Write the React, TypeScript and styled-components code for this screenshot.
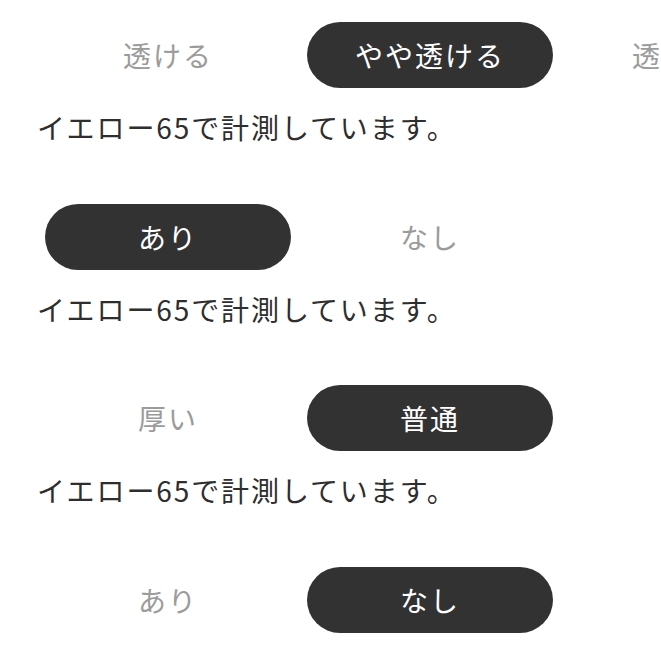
import React from "react";
import styled, { createGlobalStyle } from "styled-components";

const GlobalStyle = createGlobalStyle`
  html, body {
    margin: 0;
    padding: 0;
    background: #ffffff;
    overflow: hidden;
  }
  body {
    font-family: "Noto Sans CJK JP", "Noto Sans", sans-serif;
  }
`;

const Page = styled.div`
  width: 661px;
  height: 661px;
  overflow: hidden;
  padding: 22px 0 0 37px;
  box-sizing: border-box;
  display: flex;
  flex-direction: column;
  gap: 56.7px;
`;

const Section = styled.section`
  display: flex;
  flex-direction: column;
  gap: 19px;
`;

const OptionRow = styled.div`
  display: flex;
  white-space: nowrap;
`;

const OptionSlot = styled.div`
  flex: 0 0 262px;
  display: flex;
  justify-content: center;
  align-items: center;
  padding: 0 8px;
  box-sizing: border-box;
`;

const Option = styled.div<{ $active?: boolean }>`
  width: 246px;
  height: 66px;
  border-radius: 33px;
  display: flex;
  align-items: center;
  justify-content: center;
  font-size: 28px;
  line-height: 1;
  letter-spacing: 2px;
  background: ${(p) => (p.$active ? "#323232" : "transparent")};
  color: ${(p) => (p.$active ? "#ffffff" : "#9b9b9b")};
`;

const Note = styled.p`
  margin: 0;
  font-size: 28px;
  line-height: 40px;
  letter-spacing: 1.9px;
  color: #2e2e2e;
  white-space: nowrap;
`;

type Group = {
  options: string[];
  selected: number;
  note?: string;
};

const groups: Group[] = [
  {
    options: ["透ける", "やや透ける", "透けない"],
    selected: 1,
    note: "イエロー65で計測しています。",
  },
  {
    options: ["あり", "なし"],
    selected: 0,
    note: "イエロー65で計測しています。",
  },
  {
    options: ["厚い", "普通"],
    selected: 1,
    note: "イエロー65で計測しています。",
  },
  {
    options: ["あり", "なし"],
    selected: 1,
  },
];

const App = () => {
  return (
    <>
      <GlobalStyle />
      <Page>
        {groups.map((group, i) => (
          <Section key={i}>
            <OptionRow>
              {group.options.map((label, j) => (
                <OptionSlot key={label + j}>
                  <Option $active={j === group.selected}>{label}</Option>
                </OptionSlot>
              ))}
            </OptionRow>
            {group.note && <Note>{group.note}</Note>}
          </Section>
        ))}
      </Page>
    </>
  );
};

export default App;
